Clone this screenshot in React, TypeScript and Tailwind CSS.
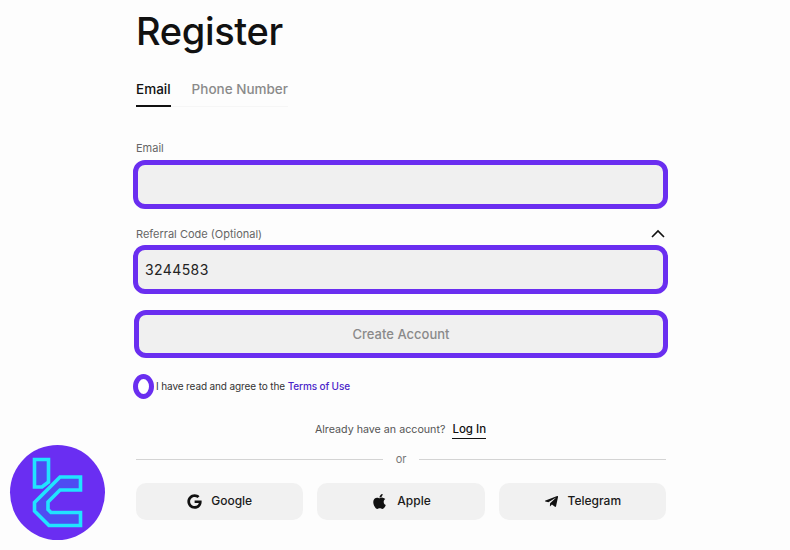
import { FaApple, FaGoogle } from "react-icons/fa";
import { FaTelegramPlane } from "react-icons/fa";

function Logo() {
  return (
    <svg viewBox="0 0 120 115" className="absolute left-0 top-[435px] w-[120px] h-[115px]">
      <circle cx="57.5" cy="57.5" r="47.5" fill="#6a2ef2" />
      <path d="M34.5 24.5 H48.5 V47 L42 52 H34.5 Z" fill="#4f4cf2" stroke="#20e4ff" strokeWidth="3.6" />
      <path d="M80.5 42 H60 L34.5 67.5 V76 L49 90.5 H80.5 V77.5 H51 L48 74.5 V67 L60 55 H80.5 Z" fill="#4f4cf2" stroke="#20e4ff" strokeWidth="3.6" />
    </svg>
  );
}

function Social({ icon, label }: { icon: React.ReactNode; label: string }) {
  return (
    <button className="flex-1 h-[37px] rounded-[10px] bg-[#f1f1f1] flex items-center justify-center gap-[9px] text-[12px] font-medium text-[#1a1a1a]">
      {icon}
      {label}
    </button>
  );
}

export default function App() {
  return (
    <div className="relative w-[790px] h-[550px] overflow-hidden bg-[#fdfdfd] font-['Inter',sans-serif]">
      <Logo />
      <div className="flex flex-col w-[535px] ml-[133px] pt-[8px]">
        <h1 className="ml-[3px] text-[38px] leading-[46px] font-medium text-[#111] tracking-[-0.35px]">Register</h1>
        <div className="ml-[3px] mt-[25px] flex gap-[21px] w-[152px] border-b border-[#f6f6f6] text-[13.5px] font-medium">
          <span className="-mb-px pb-[6px] leading-[20px] border-b-2 border-[#111] text-[#111]">Email</span>
          <span className="leading-[20px] text-[#8a8a8a] whitespace-nowrap">Phone Number</span>
        </div>
        <label className="ml-[3px] mt-[33px] text-[11px] leading-[16px] text-[#666]">Email</label>
        <div className="mt-[4px] h-[49px] rounded-[12px] border-[5px] border-[#6a2ef0] bg-[#f0f0f0]" />
        <div className="mt-[16px] ml-[3px] mr-[2px] flex items-center justify-between h-[16px] translate-y-[1px]">
          <span className="text-[11px] text-[#666]">Referral Code (Optional)</span>
          <svg width="16" height="10" viewBox="0 0 16 10" fill="none" stroke="#111" strokeWidth="1.6"><path d="M2 8 L8 2 L14 8" /></svg>
        </div>
        <div className="mt-[4px] h-[49px] rounded-[12px] border-[5px] border-[#6a2ef0] bg-[#f0f0f0] flex items-center px-[7px] text-[14px] tracking-[0.4px] text-[#222]">3244583</div>
        <button className="mt-[16px] ml-[1px] h-[48px] pt-[2px] rounded-[12px] border-[5px] border-[#6a2ef0] bg-[#f0f0f0] text-[13px] font-medium text-[#8a8a8a]">Create Account</button>
        <div className="mt-[16px] flex items-center gap-[2px] h-[25px]">
          <span className="w-[21px] h-[25px] rounded-[50%] border-[5px] border-[#6a2ef0] bg-white" />
          <span className="text-[10px] tracking-[-0.12px] text-[#333]">I have read and agree to the <span className="text-[#4a25c9] font-medium">Terms of Use</span></span>
        </div>
        <div className="mt-[22px] flex justify-center items-center gap-[7px] text-[10.7px] text-[#555]">
          <span>Already have an account?</span>
          <span className="text-[11.5px] font-medium text-[#111] border-b border-[#111]">Log In</span>
        </div>
        <div className="ml-[3px] mt-[12px] mr-[2px] flex items-center gap-[12px] text-[11px] text-[#777]">
          <div className="flex-1 h-px bg-[#d4d4d4]" />
          <span className="px-[1px]">or</span>
          <div className="flex-1 h-px bg-[#d4d4d4]" />
        </div>
        <div className="ml-[3px] mr-[2px] mt-[15px] flex gap-[14px]">
          <Social icon={<FaGoogle size={15} className="text-[#111]" />} label="Google" />
          <Social icon={<FaApple size={17} className="text-[#111]" />} label="Apple" />
          <Social icon={<FaTelegramPlane size={15} className="text-[#111]" />} label="Telegram" />
        </div>
      </div>
    </div>
  );
}
